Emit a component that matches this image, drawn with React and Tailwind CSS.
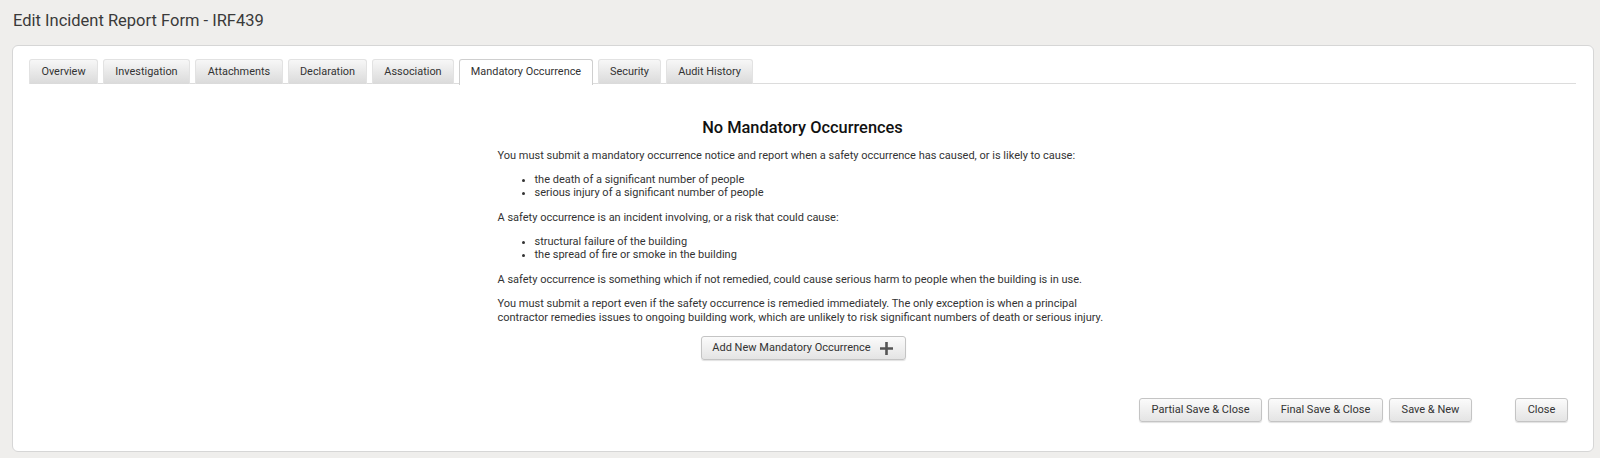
import React from "react";

const tabs = [
  ["Overview", 69],
  ["Investigation", 87],
  ["Attachments", 88],
  ["Declaration", 79],
  ["Association", 82],
  ["Mandatory Occurrence", 134],
  ["Security", 63],
  ["Audit History", 87],
];

function Btn({ children, className = "" }) {
  return (
    <button
      className={
        "h-[24px] flex items-center justify-center whitespace-nowrap rounded-[3px] border border-[#c4c4c4] bg-gradient-to-b from-[#fbfbfb] to-[#e4e4e4] text-[11px] text-[#333] shadow-[0_1px_1px_rgba(0,0,0,0.12)] " +
        className
      }
    >
      {children}
    </button>
  );
}

export default function App() {
  return (
    <div
      className="w-[1600px] h-[458px] bg-[#efeeec] overflow-hidden"
      style={{ fontFamily: "Roboto, 'Liberation Sans', sans-serif" }}
    >
      <div className="h-[45px] pl-[13px] pt-[10px] text-[16.5px] leading-[21px] text-[#3a3a3a] whitespace-nowrap">
        Edit Incident Report Form - IRF439
      </div>
      <div className="ml-[12px] mr-[6px] h-[407px] bg-white border border-[#d6d6d6] rounded-[6px] pt-[13px] pl-[16px] pr-[17px] flex flex-col">
        <div className="flex gap-[5px] border-b border-[#dcdcdc] h-[25px]">
          {tabs.map(([t, w]) => {
            const active = t === "Mandatory Occurrence";
            return (
              <div
                key={t}
                style={{ width: w }}
                className={
                  "flex items-center justify-center whitespace-nowrap text-[10.9px] text-[#333] rounded-t-[3px] border border-b-0 " +
                  (active
                    ? "bg-white border-[#cfcfcf] h-[26px] -mb-[1px] pb-[1px]"
                    : "h-[25px] bg-gradient-to-b from-[#f7f7f7] to-[#dadada] border-[#e2e2e2]")
                }
              >
                {t}
              </div>
            );
          })}
        </div>
        <div className="flex flex-col items-center pt-[34px]">
          <h2 className="text-[16.4px] leading-[20px] font-medium text-[#111] whitespace-nowrap">
            No Mandatory Occurrences
          </h2>
          <div className="w-[610px] mt-[11px] text-[11px] leading-[13.5px] text-[#333] whitespace-nowrap">
            <p>
              You must submit a mandatory occurrence notice and report when a safety occurrence has caused, or is likely to cause:
            </p>
            <ul className="list-disc pl-[37px] mt-[10px]">
              <li>the death of a significant number of people</li>
              <li>serious injury of a significant number of people</li>
            </ul>
            <p className="mt-[11px]">
              A safety occurrence is an incident involving, or a risk that could cause:
            </p>
            <ul className="list-disc pl-[37px] mt-[10.5px]">
              <li>structural failure of the building</li>
              <li>the spread of fire or smoke in the building</li>
            </ul>
            <p className="mt-[11px]">
              A safety occurrence is something which if not remedied, could cause serious harm to people when the building is in use.
            </p>
            <p className="mt-[11px]">
              You must submit a report even if the safety occurrence is remedied immediately. The only exception is when a principal
              <br />
              contractor remedies issues to ongoing building work, which are unlikely to risk significant numbers of death or serious injury.
            </p>
          </div>
          <Btn className="mt-[12px] h-[23px] w-[205px] gap-[8px] ml-[1px]">
            <span>Add New Mandatory Occurrence</span>
            <svg width="15" height="15" viewBox="0 0 15 15">
              <path d="M7.5 1v13M1 7.5h13" stroke="#555" strokeWidth="2.6" />
            </svg>
          </Btn>
        </div>
        <div className="flex justify-end mt-[38px] pr-[8px]">
          <Btn className="w-[123px]">Partial Save &amp; Close</Btn>
          <Btn className="w-[115px] ml-[6px]">Final Save &amp; Close</Btn>
          <Btn className="w-[83px] ml-[6px]">Save &amp; New</Btn>
          <Btn className="w-[53px] ml-[43px]">Close</Btn>
        </div>
      </div>
    </div>
  );
}
